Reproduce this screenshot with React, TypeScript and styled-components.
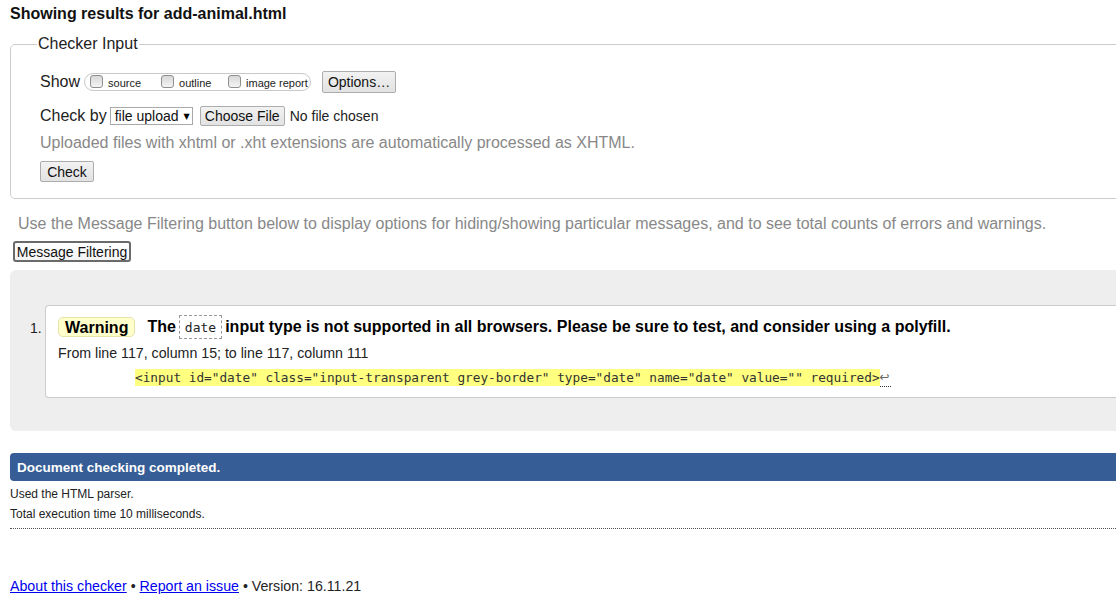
import React from "react";
import styled, { createGlobalStyle } from "styled-components";

const Global = createGlobalStyle`
  html, body { margin: 0; padding: 0; overflow: hidden; background: #fff; }
  body { font-family: "Liberation Sans", Arial, sans-serif; color: #000; }
`;

const Page = styled.div`
  width: 1200px;
  padding: 5px 0 0 10px;
  box-sizing: border-box;
`;

const Title = styled.h2`
  margin: 0;
  font-size: 16px;
  line-height: 18px;
  font-weight: bold;
  color: #111;
`;

const Fieldset = styled.fieldset`
  margin: 12px 0 0 0;
  padding: 0 0 16px 29px;
  border: 1px solid #ccc;
  border-radius: 5px;
  min-width: 0;
`;

const Legend = styled.legend`
  font-size: 16px;
  line-height: 18px;
  padding: 0 1px;
  margin-left: -3px;
  color: #222;
`;

const Row = styled.div<{ $mt: number }>`
  display: flex;
  align-items: center;
  height: 24px;
  margin-top: ${(p) => p.$mt}px;
  font-size: 16px;
  color: #222;
  white-space: nowrap;
`;

const Pill = styled.div`
  display: flex;
  align-items: flex-start;
  flex-shrink: 0;
  height: 18px;
  width: 227px;
  margin-left: 4px;
  padding: 0 5px;
  border: 1px solid #c9c9c9;
  border-radius: 10px;
  box-sizing: border-box;
`;

const CheckItem = styled.label<{ $w: number }>`
  display: flex;
  align-items: flex-start;
  flex-shrink: 0;
  width: ${(p) => p.$w}px;
  font-size: 11px;
  line-height: 18px;
  color: #222;
  white-space: nowrap;
`;

const Box = styled.span`
  display: inline-block;
  flex-shrink: 0;
  width: 11px;
  height: 11px;
  margin: 1px 5px 0 0;
  border: 1px solid #8e8f8f;
  border-radius: 3px;
  background: linear-gradient(#d8d8d8, #f4f4f4);
  box-sizing: content-box;
`;

const Btn = styled.button<{ $h: number; $ml: number; $w: number; $mt?: number }>`
  display: block;
  flex-shrink: 0;
  height: ${(p) => p.$h}px;
  width: ${(p) => p.$w}px;
  margin: ${(p) => p.$mt ?? 0}px 0 0 ${(p) => p.$ml}px;
  padding: 0;
  font-family: "Liberation Sans", Arial, sans-serif;
  font-size: 14px;
  color: #111;
  white-space: nowrap;
  border: 1px solid #adadad;
  border-radius: 2px;
  background: linear-gradient(#f2f2f2, #e2e2e2);
  box-sizing: border-box;
`;

const Select = styled.div`
  display: flex;
  align-items: center;
  flex-shrink: 0;
  height: 18px;
  width: 83px;
  margin-left: 3px;
  padding: 0 0 0 4px;
  border: 1px solid #a9a9a9;
  box-sizing: border-box;
  font-size: 14px;
  color: #111;
  background: #fff;
  gap: 5px;
  white-space: nowrap;
`;

const Arrow = styled.span`
  font-family: "DejaVu Sans", sans-serif;
  font-size: 8px;
  color: #000;
`;

const NoFile = styled.span`
  margin-left: 5px;
  font-size: 14px;
  color: #222;
`;

const Hint = styled.p<{ $mt: number; $ml?: number }>`
  margin: ${(p) => p.$mt}px 0 0 ${(p) => p.$ml ?? 0}px;
  font-size: 16px;
  line-height: 18px;
  color: #888;
  white-space: nowrap;
`;

const FilterBtn = styled.button`
  display: block;
  margin: 8px 0 0 3px;
  height: 21px;
  width: 118px;
  padding: 0;
  font-family: "Liberation Sans", Arial, sans-serif;
  font-size: 14px;
  color: #111;
  border: 2px solid #6a6a6a;
  border-radius: 3px;
  background: linear-gradient(#fff, #f3f3f3);
  box-sizing: border-box;
`;

const Results = styled.ol`
  margin: 8px 0 0 0;
  padding: 35px 0 33px 35px;
  background: #eee;
  border-radius: 6px 0 0 6px;
  list-style: none;
`;

const Item = styled.li`
  position: relative;
  padding: 8px 0 10px 12px;
  background: #fff;
  border: 1px solid #ccc;
  border-right: none;
  border-radius: 4px 0 0 4px;
`;

const Num = styled.span`
  position: absolute;
  left: -16px;
  top: 14px;
  font-size: 14px;
  color: #222;
`;

const MsgLine = styled.p`
  display: flex;
  align-items: center;
  margin: 0;
  font-size: 16px;
  font-weight: bold;
  color: #000;
  height: 25px;
  white-space: pre;
`;

const Badge = styled.strong`
  display: inline-block;
  height: 20px;
  line-height: 19px;
  padding: 0 6px;
  margin-right: 12px;
  background: #ffc;
  border: 1px solid #e6e2aa;
  border-radius: 5px;
  box-sizing: border-box;
`;

const InlineCode = styled.code`
  display: inline-block;
  height: 24px;
  line-height: 23px;
  padding: 0 5px;
  margin: 0 3px;
  border: 1px dashed #999;
  box-sizing: border-box;
  font-family: "DejaVu Sans Mono", monospace;
  font-size: 13px;
  font-weight: normal;
  color: #222;
`;

const Location = styled.p`
  margin: 6px 0 0 0;
  font-size: 14.2px;
  line-height: 16px;
  color: #222;
`;

const Extract = styled.p`
  display: flex;
  align-items: flex-start;
  margin: 8px 0 0 77px;
  font-family: "DejaVu Sans Mono", monospace;
  font-size: 12.75px;
  line-height: 17px;
  color: #333;
  white-space: pre;
`;

const Mark = styled.mark`
  background: #ffff80;
  color: #333;
`;

const Ret = styled.span`
  color: #666;
  font-family: "DejaVu Sans", sans-serif;
  font-size: 12px;
  border-bottom: 1px dotted #333;
  line-height: 17px;
  padding-right: 1px;
`;

const Done = styled.div`
  margin-top: 22px;
  height: 28px;
  display: flex;
  align-items: center;
  padding-left: 7px;
  background: #365d95;
  border-radius: 4px 0 0 4px;
  color: #fff;
  font-size: 13.5px;
  font-weight: bold;
`;

const Details = styled.div`
  padding: 3px 0 4px 0;
  border-bottom: 1px dotted #555;
  font-size: 12px;
  line-height: 20px;
  color: #222;
`;

const Footer = styled.p`
  margin: 49px 0 0 0;
  font-size: 14.2px;
  line-height: 16px;
  color: #222;
`;

const Link = styled.a`
  color: #0000ee;
  text-decoration: underline;
`;

export default function App() {
  return (
    <Page>
      <Global />
      <Title>Showing results for add-animal.html</Title>
      <Fieldset>
        <Legend>Checker Input</Legend>
        <Row $mt={17}>
          Show
          <Pill>
            <CheckItem $w={71}>
              <Box />
              source
            </CheckItem>
            <CheckItem $w={67}>
              <Box />
              outline
            </CheckItem>
            <CheckItem $w={78}>
              <Box />
              image report
            </CheckItem>
          </Pill>
          <Btn $h={22} $ml={11} $w={74}>Options…</Btn>
        </Row>
        <Row $mt={10}>
          Check by
          <Select>
            file upload <Arrow>▼</Arrow>
          </Select>
          <Btn $h={20} $ml={7} $w={85}>Choose File</Btn>
          <NoFile>No file chosen</NoFile>
        </Row>
        <Hint $mt={6}>Uploaded files with xhtml or .xht extensions are automatically processed as XHTML.</Hint>
        <Btn $h={21} $ml={0} $w={54} $mt={9}>Check</Btn>
      </Fieldset>
      <Hint $mt={16} $ml={8}>
        Use the Message Filtering button below to display options for hiding/showing particular messages, and to see total counts of errors and warnings.
      </Hint>
      <FilterBtn>Message Filtering</FilterBtn>
      <Results>
        <Item>
          <Num>1.</Num>
          <MsgLine>
            <Badge>Warning</Badge>
            The<InlineCode>date</InlineCode>input type is not supported in all browsers. Please be sure to test, and consider using a polyfill.
          </MsgLine>
          <Location>From line 117, column 15; to line 117, column 111</Location>
          <Extract>
            <Mark>{'<input id="date" class="input-transparent grey-border" type="date" name="date" value="" required>'}</Mark>
            <Ret>↩</Ret>
          </Extract>
        </Item>
      </Results>
      <Done>Document checking completed.</Done>
      <Details>
        Used the HTML parser.
        <br />
        Total execution time 10 milliseconds.
      </Details>
      <Footer>
        <Link href="#">About this checker</Link> • <Link href="#">Report an issue</Link> • Version: 16.11.21
      </Footer>
    </Page>
  );
}
